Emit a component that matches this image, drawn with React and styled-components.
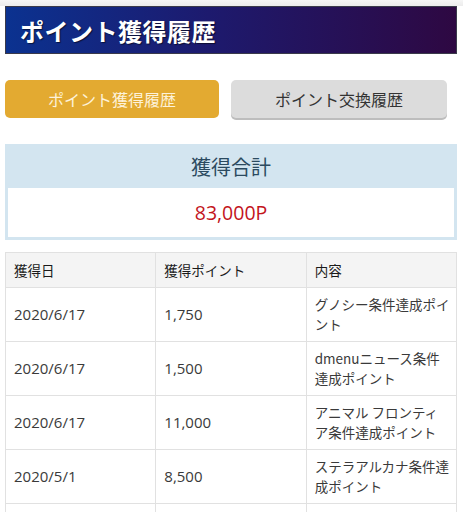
import React from "react";
import styled, { createGlobalStyle } from "styled-components";

const GlobalStyle = createGlobalStyle`
  html, body {
    margin: 0;
    padding: 0;
    background: #ffffff;
  }
  body {
    font-family: "Noto Sans CJK JP", "Noto Sans", sans-serif;
    color: #333;
  }
`;

const Page = styled.div`
  width: 463px;
  padding-bottom: 20px;
`;

const TopStrip = styled.div`
  height: 6px;
  background: linear-gradient(#f6f6f6, #ececec);
`;

const Content = styled.div`
  padding: 0 6px 0 5px;
`;

const TitleBar = styled.h1`
  margin: 0;
  height: 46px;
  display: flex;
  align-items: center;
  padding-left: 14px;
  border: 1px solid #3a3a4a;
  background: linear-gradient(to right, #0b3290 0%, #1d1a6e 45%, #2e0842 100%);
  color: #ffffff;
  font-size: 24px;
  font-weight: bold;
  letter-spacing: 0.5px;
  text-shadow: 1px 1px 1px rgba(0, 0, 0, 0.55);
`;

const Tabs = styled.div`
  display: grid;
  grid-template-columns: 214px 216px;
  column-gap: 12px;
  margin-top: 26px;
`;

const TabButton = styled.button`
  height: 38px;
  border: none;
  border-radius: 5px;
  font-family: "Noto Sans CJK JP", sans-serif;
  font-size: 16px;
  cursor: pointer;
  background: ${p => (p.active ? "#e3aa31" : "#dcdcdc")};
  color: ${p => (p.active ? "#fdf2da" : "#333333")};
  box-shadow: ${p => (p.active ? "none" : "0 2px 0 #bdbdbd")};
`;

const Summary = styled.section`
  margin-top: 26px;
  border: 3px solid #d3e5f0;
  border-top: none;
`;

const SummaryHead = styled.div`
  height: 44px;
  margin: 0 -3px;
  background: #d3e5f0;
  display: flex;
  align-items: center;
  justify-content: center;
  font-size: 20px;
  color: #2b4a5f;
`;

const SummaryValue = styled.div`
  height: 49px;
  display: flex;
  align-items: center;
  justify-content: center;
  font-family: "Open Sans", sans-serif;
  font-size: 19.5px;
  color: #c3141c;
`;

const Table = styled.table`
  margin-top: 12px;
  width: 100%;
  table-layout: fixed;
  border-collapse: collapse;
  font-size: 13.5px;
  line-height: 19.5px;
`;

const HeadCell = styled.th`
  background: #f4f4f4;
  border: 1px solid #e1e1e1;
  padding: 7px 6px 7px 8px;
  text-align: left;
  font-weight: normal;
  color: #1a1a1a;
  line-height: 20px;
`;

const Cell = styled.td`
  height: 39px;
  border: 1px solid #e1e1e1;
  padding: 7px 6px 7px 8px;
  color: #3a3a3a;
  vertical-align: middle;
  font-family: ${p =>
    p.numeric ? '"Open Sans", sans-serif' : '"Noto Sans CJK JP", sans-serif'};
  font-size: ${p => (p.numeric ? "15px" : "13.5px")};
  word-break: break-all;
`;

const history = [
  { date: "2020/6/17", points: "1,750", note: "グノシー条件達成ポイント" },
  { date: "2020/6/17", points: "1,500", note: "dmenuニュース条件達成ポイント" },
  { date: "2020/6/17", points: "11,000", note: "アニマル フロンティア条件達成ポイント" },
  { date: "2020/5/1", points: "8,500", note: "ステラアルカナ条件達成ポイント" },
  { date: "2020/4/28", points: "3,000", note: "ログインボーナス" }
];

const App = () => {
  return (
    <Page>
      <GlobalStyle />
      <TopStrip />
      <Content>
        <TitleBar>ポイント獲得履歴</TitleBar>
        <Tabs>
          <TabButton active>ポイント獲得履歴</TabButton>
          <TabButton>ポイント交換履歴</TabButton>
        </Tabs>
        <Summary>
          <SummaryHead>獲得合計</SummaryHead>
          <SummaryValue>83,000P</SummaryValue>
        </Summary>
        <Table>
          <thead>
            <tr>
              <HeadCell>獲得日</HeadCell>
              <HeadCell>獲得ポイント</HeadCell>
              <HeadCell>内容</HeadCell>
            </tr>
          </thead>
          <tbody>
            {history.map((row, i) => (
              <tr key={i}>
                <Cell numeric>{row.date}</Cell>
                <Cell numeric>{row.points}</Cell>
                <Cell>{row.note}</Cell>
              </tr>
            ))}
          </tbody>
        </Table>
      </Content>
    </Page>
  );
};

export default App;
